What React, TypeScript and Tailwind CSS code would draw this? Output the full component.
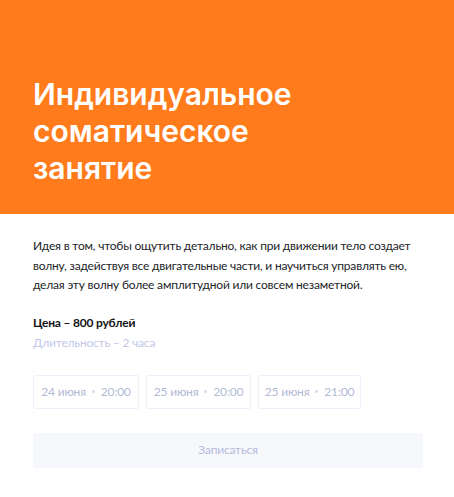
const slots = [
  { day: "24 июня", time: "20:00", w: "w-[106px]" },
  { day: "25 июня", time: "20:00", w: "w-[105px]" },
  { day: "25 июня", time: "21:00", w: "w-[103px]" },
];

export default function App() {
  return (
    <div className="w-[454px] h-[497px] bg-white font-['Lato','Noto_Sans',sans-serif] tracking-[-0.2px]">
      <div className="h-[214px] bg-[#ff7b1c] px-[33px] pt-[76px]">
        <h1 className="font-['Inter',sans-serif] text-[30px] leading-[37px] font-semibold text-white tracking-normal">
          Индивидуальное
          <br />
          соматическое
          <br />
          занятие
        </h1>
      </div>

      <div className="px-[33px] pt-[22px]">
        <p className="text-[12px] leading-[19.5px] text-[#222429] whitespace-nowrap">
          Идея в том, чтобы ощутить детально, как при движении тело создает
          <br />
          волну, задействуя все двигательные части, и научиться управлять ею,
          <br />
          делая эту волну более амплитудной или совсем незаметной.
        </p>

        <div className="mt-[18px] text-[12px] leading-[20px] font-bold text-[#141414]">
          Цена – 800 рублей
        </div>
        <div className="text-[12px] leading-[20px] text-[#c3c8ea]">
          Длительность – 2 часа
        </div>

        <div className="flex gap-[7px] mt-[22px]">
          {slots.map((s, i) => (
            <div
              key={i}
              className={`${s.w} h-[34px] flex items-center justify-center gap-[6px] border border-[#eef0fb] rounded-[2px] text-[12px] text-[#b3bad6]`}
            >
              <span>{s.day}</span>
              <span className="w-[3px] h-[3px] rounded-full bg-[#d8dcee]" />
              <span>{s.time}</span>
            </div>
          ))}
        </div>

        <button className="mt-[24px] w-[390px] h-[35px] bg-[#f7f8fc] text-[12px] text-[#b4bcdc] flex items-center justify-center">
          Записаться
        </button>
      </div>
    </div>
  );
}
